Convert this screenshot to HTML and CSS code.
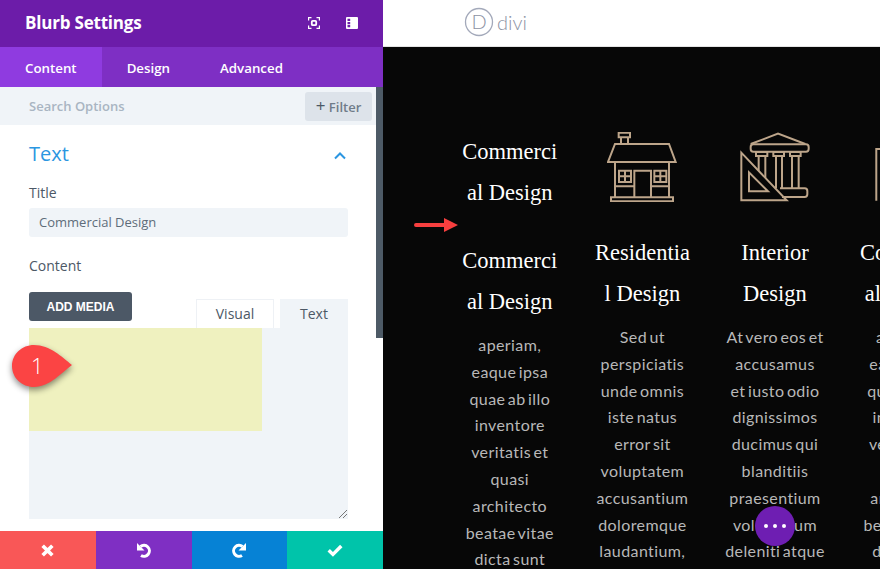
FILE: index.html
```html
<!DOCTYPE html>
<html lang="en">
<head>
  <meta charset="UTF-8" />
  <title>Blurb Settings</title>
  <link rel="stylesheet" href="styles.css">
</head>
<body>
  <div class="app">

    <aside class="panel">
      <header class="panel-head">
        <h1>Blurb Settings</h1>
        <svg class="head-icon" viewBox="0 0 12 12"><path d="M.6 3.5V.6h2.9M8.5.6h2.9v2.9M11.4 8.5v2.9H8.5M3.500 11.400H.6V8.5" /><rect class="ring" x="3.800" y="3.800" width="4.400" height="4.400" rx="1" /></svg>
        <svg class="head-icon head-split" viewBox="0 0 12 12"><path class="solid" fill-rule="evenodd" d="M1 0h10a1 1 0 0 1 1 1v10a1 1 0 0 1-1 1H1a1 1 0 0 1-1-1V1a1 1 0 0 1 1-1zM1.500 1.800v2.300h2.700V1.800zM1.500 5v2.200h2.700V5zM1.500 8v2.300h2.700V8z" /></svg>
      </header>

      <nav class="tabs">
        <a class="tab active">Content</a>
        <a class="tab">Design</a>
        <a class="tab">Advanced</a>
      </nav>

      <div class="search-row">
        <span class="search-text">Search Options</span>
        <button class="filter-btn"><span class="plus">+</span> Filter</button>
      </div>

      <section class="options">
        <div class="group-title">
          <span>Text</span>
          <svg class="chevron" viewBox="0 0 12 8"><path d="M1 6.5l5-5 5 5" /></svg>
        </div>
        <label class="field-label">Title</label>
        <div class="text-input">Commercial Design</div>
        <label class="field-label content-label">Content</label>
        <div class="media-row">
          <button class="media-btn">ADD MEDIA</button>
          <div class="editor-tabs">
            <span class="editor-tab visual">Visual</span>
            <span class="editor-tab">Text</span>
          </div>
        </div>
        <div class="editor">
          <div class="selection"></div>
          <svg class="resize" viewBox="0 0 9 9"><path d="M0 8l8-8M4 8l4-4" /></svg>
        </div>
      </section>

      <footer class="actions">
        <button class="action red">
          <svg viewBox="0 0 14 14"><path d="M2.500 2.500l9 9M11.500 2.500l-9 9" /></svg>
        </button>
        <button class="action purple">
          <svg viewBox="0 0 16 16"><path d="M4.500 4.500A5.500 5.500 0 1 1 5 13.500" /><path class="solid" d="M1 1v7.500h7.500z" /></svg>
        </button>
        <button class="action blue">
          <svg viewBox="0 0 16 16"><path d="M11.500 4.500A5.500 5.500 0 1 0 11 13.500" /><path class="solid" d="M15 1v7.500H7.500z" /></svg>
        </button>
        <button class="action teal">
          <svg viewBox="0 0 14 14"><path d="M1.500 7.300l3.700 3.600 7.300-7.400" /></svg>
        </button>
      </footer>

      <div class="scrollbar"></div>
    </aside>

    <main class="stage">
      <div class="topbar">
        <svg class="logo-mark" viewBox="0 0 30 30"><circle cx="15" cy="15" r="13.5" /><text x="15" y="22" text-anchor="middle">D</text></svg>
        <span class="logo-word">divi</span>
      </div>

      <div class="columns">
        <div class="col first">
          <h3>Commerci<br>al Design</h3>
          <h3 class="repeat">Commerci<br>al Design</h3>
          <p>aperiam,<br>eaque ipsa<br>quae ab illo<br>inventore<br>veritatis et<br>quasi<br>architecto<br>beatae vitae<br>dicta sunt</p>
        </div>

        <div class="col">
          <svg class="col-icon" viewBox="80 36 210 210">
            <path d="M115 38h34v14h-34zM122 52v20M143 52v20" />
            <path d="M104 72h162l20 54H83z" />
            <path d="M104 126v106M266 126v106M92 232h186v12H92z" />
            <path d="M162 232v-80h50v80" />
            <path d="M116 152h36v34h-36zM134 152v34M116 169h36M222 152h36v34h-36zM240 152v34M222 169h36" />
            <path d="M104 199h58M212 199h54" />
          </svg>
          <h3>Residentia<br>l Design</h3>
          <p>Sed ut<br>perspiciatis<br>unde omnis<br>iste natus<br>error sit<br>voluptatem<br>accusantium<br>doloremque<br>laudantium,</p>
        </div>

        <div class="col">
          <svg class="col-icon" viewBox="480 36 210 210">
            <path d="M484 98v143h136z" />
            <path d="M507 157v57h57z" />
            <path d="M512 72l82-31 82 31" />
            <rect x="512" y="73" width="174" height="22" rx="8" />
            <path d="M528 96h34v12h-34zM580 96h32v12h-32zM630 96h32v12h-32z" />
            <path d="M536 108v44M556 108v66M588 108v97M606 108v97M636 108v97M656 108v97" />
            <path d="M600 205h74a8 8 0 0 1 8 8v10a8 8 0 0 1-8 8h-68" />
          </svg>
          <h3>Interior<br>Design</h3>
          <p>At vero eos et<br>accusamus<br>et iusto odio<br>dignissimos<br>ducimus qui<br>blanditiis<br>praesentium<br>voluptatum<br>deleniti atque</p>
        </div>

        <div class="col">
          <svg class="col-icon" viewBox="0 0 70 70">
            <path d="M3.300 68.700V17H67M8 20h12v8H8z" />
          </svg>
          <h3>Commerci<br>al Design</h3>
          <p>aperiam,<br>eaque ipsa<br>quae ab illo<br>inventore<br>veritatis et<br>quasi<br>architecto<br>beatae vitae<br>dicta sunt</p>
        </div>
      </div>
    </main>

    <!-- things drawn over the screenshot -->
    <div class="callout">
      <svg viewBox="0 0 64 46"><path d="M24 2C40 2 52 14 62 22 52 29 40 44 24 44 12 44 2 35 2 23S12 2 24 2z" /></svg>
      <span>1</span>
    </div>
    <svg class="red-arrow" viewBox="0 0 44 14"><path d="M2 5h28V0l14 7-14 7V9H2a2 2 0 0 1 0-4z" /></svg>
    <button class="fab"><i></i><i></i><i></i></button>
  </div>
</body>
</html>
```

FILE: styles.css
```css
* { margin: 0; padding: 0; box-sizing: border-box; }
body { font-family: 'Open Sans', sans-serif; background-color: #070707; overflow: hidden; }
button { font-family: inherit; border: none; }

.app {
  position: relative;
  display: flex;
  width: 880px;
  height: 569px;
  overflow: hidden;
}

/* Settings panel */
.panel {
  position: relative;
  display: flex;
  flex-direction: column;
  width: 383px;
  flex-shrink: 0;
  background-color: #fff;
}

.panel-head {
  display: flex;
  align-items: center;
  height: 47px;
  padding: 0 0 2px 25px;
  background-color: #6c1ca9;
  color: #fff;
}
.panel-head h1 { font-size: 17px; font-weight: 700; letter-spacing: -0.2px; flex: 1; }
.head-icon { width: 12px; height: 12px; margin-right: 26px; fill: none; stroke: #fff; stroke-width: 1.2; }
.head-icon .ring { stroke-width: 1.8; }
.head-split { margin-right: 25px; }
.head-icon .solid { fill: #fff; stroke: none; }

.tabs { display: flex; height: 40px; background-color: #7e2fc4; }
.tab {
  padding: 0 25px;
  line-height: 42px;
  font-size: 13.300px;
  font-weight: 600;
  color: #fff;
}
.tab.active { background-color: #8f3be0; }

.search-row {
  display: flex;
  align-items: center;
  justify-content: space-between;
  width: 376px;
  height: 38px;
  padding: 0 4px 0 29px;
  background-color: #f0f4f8;
}
.search-text { font-size: 13px; font-weight: 600; color: #a9b5c2; margin-top: -1px; }
.filter-btn {
  width: 67px;
  height: 29px;
  border-radius: 3px;
  background-color: #dde3ea;
  color: #6f7c89;
  font-size: 13px;
  font-weight: 600;
}
.plus { font-size: 17px; font-weight: 400; color: #4c5866; line-height: 1; }

.options { display: flex; flex-direction: column; margin: 0 35px 0 29px; flex: 1; }
.group-title {
  display: flex;
  align-items: center;
  justify-content: space-between;
  height: 58px;
  padding-bottom: 2px;
  font-size: 20px;
  color: #2b96e1;
}
.chevron { width: 12px; height: 8px; margin: 6px 2px 0 0; fill: none; stroke: #2b96e1; stroke-width: 2; }

.field-label { display: block; height: 20px; font-size: 14px; line-height: 20px; color: #4c5866; }
.text-input {
  height: 29px;
  margin-top: 5px;
  padding-left: 10px;
  border-radius: 3px;
  background-color: #f0f4f8;
  font-size: 13px;
  font-weight: 500;
  line-height: 29px;
  color: #5e6c7a;
}
.content-label { margin-top: 19px; }

.media-row {
  display: flex;
  justify-content: space-between;
  align-items: flex-end;
  height: 36px;
  margin-top: 16px;
}
.media-btn {
  align-self: flex-start;
  width: 103px;
  height: 29px;
  border-radius: 3px;
  background-color: #4c5866;
  color: #fff;
  font-family: 'Liberation Sans', sans-serif;
  font-size: 12px;
  font-weight: bold;
}
.editor-tabs { display: flex; gap: 6px; }
.editor-tab {
  width: 68px;
  height: 29px;
  background-color: #f0f4f8;
  font-size: 14px;
  line-height: 29px;
  text-align: center;
  color: #4c5866;
}
.editor-tab.visual { width: 78px; background-color: #fff; border: 1px solid #eef1f5; border-bottom: none; line-height: 28px; }

.editor { position: relative; height: 191px; background-color: #f0f4f8; }
.selection { width: 233px; height: 103px; background-color: #eff1bf; }
.resize {
  position: absolute;
  right: 0;
  bottom: 0;
  width: 9px;
  height: 9px;
  fill: none;
  stroke: #777;
  stroke-width: 1;
}

.actions { display: flex; height: 38px; margin-top: 12px; }
.action {
  flex: 1;
  display: flex;
  align-items: center;
  justify-content: center;
}
.action svg { width: 16px; height: 16px; fill: none; stroke: #fff; stroke-width: 3; }
.action .solid { fill: #fff; stroke: none; }
.red { background-color: #f95757; }
.red svg { width: 15px; height: 15px; stroke-width: 3.4; }
.purple { background-color: #7f2fc3; }
.blue { background-color: #0682d5; }
.teal { background-color: #00c4aa; }

.scrollbar {
  position: absolute;
  top: 87px;
  right: 0;
  width: 7px;
  height: 251px;
  background-color: #4d5a66;
}

/* Page preview */
.stage { flex: 1; min-width: 0; background-color: #070707; }

.topbar {
  display: flex;
  align-items: center;
  height: 47px;
  padding: 0 0 3px 81px;
  background-color: #fff;
  border-bottom: 1px solid #e4e4e4;
}
.logo-mark { width: 30px; height: 30px; fill: none; stroke: #a3a9ba; stroke-width: 1.3; }
.logo-mark text {
  font-family: 'Lato', sans-serif;
  font-size: 20px;
  font-weight: 300;
  fill: #8c92a3;
  stroke: none;
}
.logo-word {
  margin-left: 3px;
  font-family: 'Lato', sans-serif;
  font-size: 20px;
  font-weight: 300;
  color: #8c92a3;
}

.columns { display: flex; padding: 84px 0 0 60.500px; }
.col { width: 132.6px; flex-shrink: 0; text-align: center; }
.col h3 {
  font-family: 'Liberation Serif', serif;
  font-size: 22.500px;
  font-weight: normal;
  line-height: 41px;
  color: #fff;
}
.col p {
  margin-top: 10px;
  font-family: 'Lato', sans-serif;
  font-size: 16px;
  letter-spacing: 0.4px;
  word-spacing: -2px;
  line-height: 26.800px;
  color: #b8b8b8;
}
.col h3.repeat { margin-top: 27px; }
.col-icon {
  display: block;
  width: 70px;
  height: 70px;
  margin: 1px auto 30px;
  fill: none;
  stroke: #bda58a;
  stroke-width: 6;
}
.col:last-child .col-icon { stroke-width: 2; }
.col:last-child { margin-right: -100px; }

/* Overlays */
.callout { position: absolute; left: 10px; top: 343px; width: 64px; height: 46px; }
.callout svg { display: block; width: 64px; height: 46px; fill: #fb4444; filter: drop-shadow(0 3px 3px rgba(0, 0, 0, 0.45)); }
.callout span {
  position: absolute;
  left: 21px;
  top: 7px;
  font-size: 22px;
  font-weight: 300;
  line-height: 30px;
  color: #fff;
}
.red-arrow { position: absolute; left: 414px; top: 218px; width: 44px; height: 14px; fill: #f73f3f; }
.fab {
  position: absolute;
  left: 755px;
  top: 506px;
  display: flex;
  align-items: center;
  justify-content: center;
  gap: 5px;
  width: 40px;
  height: 40px;
  border-radius: 50%;
  background-color: #6e1eb2;
}
.fab i { width: 4px; height: 4px; border-radius: 50%; background-color: #fff; }
```
